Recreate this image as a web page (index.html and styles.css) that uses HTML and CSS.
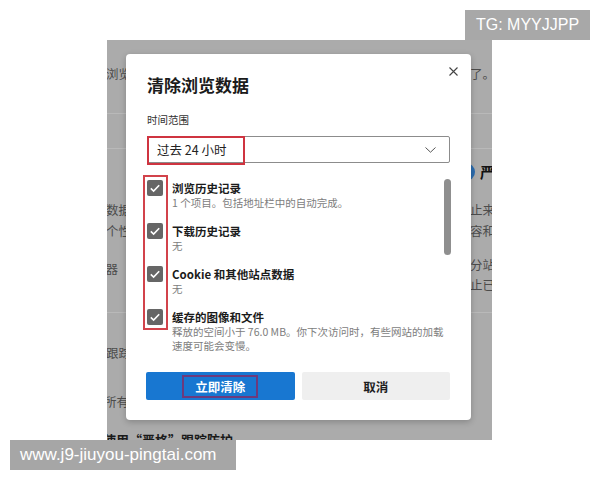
FILE: index.html
```html
<!DOCTYPE html>
<html lang="zh-CN">
<head>
<meta charset="utf-8">
<title>清除浏览数据</title>
<link rel="stylesheet" href="styles.css">
</head>
<body>
<div class="stage">
  <div class="backdrop">
    <div class="bg-page">
      <div class="bg-row row-a"><span class="bl w24"><span>清除你的浏览</span></span><span class="br">了。某些</span></div>
      <div class="bg-divider d1"></div>
      <div class="bg-divider d2"></div>
      <div class="bg-row row-b"><span class="bl"><span></span></span><span class="br strong"><i class="dot"></i>严格</span></div>
      <div class="bg-row row-c"><span class="bl w24"><span>保存数据</span></span><span class="br">止来自</span></div>
      <div class="bg-row row-d"><span class="bl w24"><span>通过个性</span></span><span class="br">容和广</span></div>
      <div class="bg-row row-e"><span class="bl w11 low"><span>浏览器</span></span><span class="br">分站点</span></div>
      <div class="bg-row row-f"><span class="bl"><span></span></span><span class="br">止已知</span></div>
      <div class="bg-divider d3"></div>
      <div class="bg-row row-g"><span class="bl w24"><span>阻止跟踪</span></span><span class="br"></span></div>
      <div class="bg-row row-h"><span class="bl w22"><span>阻止所有</span></span><span class="br"></span></div>
      <div class="bg-row row-i"><span class="bold-line">使用“严格”跟踪防护</span></div>
    </div>

    <div class="dialog">
      <div class="dlg-head">
        <h1 class="dlg-title">清除浏览数据</h1>
        <span class="dlg-close">
          <svg width="9" height="9" viewBox="0 0 9 9"><path d="M0.5 0.5L8.5 8.5M8.5 0.5L0.5 8.5" stroke="#444" stroke-width="1.1" fill="none"/></svg>
        </span>
      </div>
      <div class="dlg-label">时间范围</div>
      <div class="select">
        <span class="select-text">过去 24 小时</span>
        <svg class="chev" width="11" height="6" viewBox="0 0 11 6"><path d="M0.5 0.5L5.5 5.2L10.5 0.5" stroke="#555" stroke-width="1" fill="none"/></svg>
        <span class="mark mark-select"></span>
      </div>
      <div class="list">
        <div class="items">
          <div class="item">
            <span class="cb"><svg width="16" height="16" viewBox="0 0 16 16"><path d="M3.8 8.4L6.6 11.1L12.2 5.2" stroke="#fff" stroke-width="1.6" fill="none"/></svg></span>
            <div class="item-text">
              <div class="item-title">浏览历史记录</div>
              <div class="item-sub">1 个项目。包括地址栏中的自动完成。</div>
            </div>
          </div>
          <div class="item">
            <span class="cb"><svg width="16" height="16" viewBox="0 0 16 16"><path d="M3.8 8.4L6.6 11.1L12.2 5.2" stroke="#fff" stroke-width="1.6" fill="none"/></svg></span>
            <div class="item-text">
              <div class="item-title">下载历史记录</div>
              <div class="item-sub">无</div>
            </div>
          </div>
          <div class="item">
            <span class="cb"><svg width="16" height="16" viewBox="0 0 16 16"><path d="M3.8 8.4L6.6 11.1L12.2 5.2" stroke="#fff" stroke-width="1.6" fill="none"/></svg></span>
            <div class="item-text">
              <div class="item-title">Cookie 和其他站点数据</div>
              <div class="item-sub">无</div>
            </div>
          </div>
          <div class="item">
            <span class="cb"><svg width="16" height="16" viewBox="0 0 16 16"><path d="M3.8 8.4L6.6 11.1L12.2 5.2" stroke="#fff" stroke-width="1.6" fill="none"/></svg></span>
            <div class="item-text">
              <div class="item-title">缓存的图像和文件</div>
              <div class="item-sub">释放的空间小于 76.0 MB。你下次访问时，有些网站的加载<br>速度可能会变慢。</div>
            </div>
          </div>
          <span class="mark mark-checks"></span>
        </div>
        <div class="scroll-track"><div class="scroll-thumb"></div></div>
      </div>
      <div class="buttons">
        <button class="btn btn-primary"><span class="btn-mark">立即清除</span></button>
        <button class="btn btn-secondary">取消</button>
      </div>
    </div>
  </div>

  <div class="tag">TG: MYYJJPP</div>
  <div class="watermark">www.j9-jiuyou-pingtai.com</div>
</div>
</body>
</html>
```

FILE: styles.css
```css
* { box-sizing: border-box; }

html, body {
  margin: 0;
  padding: 0;
  background: #fff;
}

body {
  font-family: "Noto Sans CJK SC", "Noto Sans", sans-serif;
}

.stage {
  position: relative;
  width: 600px;
  height: 480px;
  padding: 40px 0 0 107px;
}

.backdrop {
  position: relative;
  width: 385px;
  height: 400px;
  background: #ababab;
  overflow: hidden;
}

/* dimmed page behind the dialog */
.bg-page {
  display: flex;
  flex-direction: column;
  width: 100%;
  color: #4c4c4c;
  font-size: 12.5px;
}

.bg-row {
  display: flex;
  justify-content: space-between;
  height: 20px;
  line-height: 20px;
  white-space: nowrap;
}

.bl {
  display: flex;
  justify-content: flex-end;
  width: 24px;
  overflow: hidden;
}

.bl.w24 { width: 24px; }
.bl.w22 { width: 22px; }
.bl.w11 { width: 11px; }
.bl.low { padding-top: 4px; }

.br {
  display: flex;
  align-items: center;
  width: 22px;
  overflow: hidden;
}

.br.strong {
  font-weight: 700;
  color: #111;
  font-size: 15px;
}

.dot {
  flex: none;
  width: 18px;
  height: 18px;
  border-radius: 50%;
  background: #2c6cae;
  margin-left: -13px;
  margin-right: 5px;
}

.bg-divider {
  height: 1px;
  background: #b9b9b9;
}

.row-a { margin-top: 24px; }
.d1 { margin-top: 29px; }
.d2 { margin-top: 34px; }
.row-b { margin-top: 13px; }
.row-c { margin-top: 18px; }
.row-d { margin-top: 1px; }
.row-e { margin-top: 14px; }
.row-f { margin-top: 0; }
.d3 { margin-top: 17px; }
.row-g { margin-top: 30px; }
.row-h { margin-top: 29px; }
.row-i { margin-top: 18px; }

.bold-line {
  font-weight: 700;
  color: #1a1a1a;
  font-size: 13px;
  margin-left: -4px;
}

/* dialog */
.dialog {
  position: absolute;
  left: 19px;
  top: 14px;
  width: 345px;
  height: 366px;
  background: #fff;
  border-radius: 4px;
  box-shadow: 0 2px 6px rgba(0, 0, 0, 0.22);
  padding: 19px 21px 19px 21px;
  display: flex;
  flex-direction: column;
}

.dlg-head {
  display: flex;
  justify-content: space-between;
  align-items: flex-start;
}

.dlg-title {
  margin: 0;
  font-size: 17px;
  line-height: 24px;
  font-weight: 700;
  color: #1b1b1b;
}

.dlg-close {
  display: flex;
  margin-top: -6px;
  margin-right: -8px;
}

.dlg-label {
  margin-top: 15px;
  font-size: 10.5px;
  line-height: 16px;
  color: #333;
}

.select {
  position: relative;
  margin-top: 8px;
  height: 27px;
  border: 1px solid #8c8c8c;
  border-radius: 2px;
  display: flex;
  align-items: center;
  justify-content: space-between;
  padding: 0 13px 0 9px;
}

.select-text {
  font-size: 12.5px;
  color: #222;
}

.mark {
  position: absolute;
  border: 2px solid #cf3440;
}

.mark-select {
  left: -1px;
  top: -1px;
  width: 98px;
  height: 29px;
}

.list {
  margin-top: 17px;
  display: flex;
  justify-content: space-between;
}

.items {
  position: relative;
  display: flex;
  flex-direction: column;
  gap: 13px;
}

.item {
  display: flex;
  align-items: flex-start;
  gap: 9px;
}

.cb {
  flex: none;
  width: 16px;
  height: 16px;
  border-radius: 2px;
  background: #666;
  display: flex;
}

.item-title {
  font-size: 11.5px;
  line-height: 16px;
  font-weight: 700;
  color: #1b1b1b;
}

.item-sub {
  font-size: 10.5px;
  line-height: 14px;
  color: #7d7d7d;
}

.mark-checks {
  left: -4px;
  top: -5px;
  width: 25px;
  height: 155px;
  border-color: #d2434b;
}

.scroll-track {
  width: 7px;
  margin-right: -1px;
}

.scroll-thumb {
  margin-top: -1px;
  height: 76px;
  border-radius: 4px;
  background: #8f8f8f;
}

.buttons {
  margin-top: 19px;
  display: grid;
  grid-template-columns: 1fr 1fr;
  gap: 7px;
  margin-left: -1px;
}

.btn {
  height: 28px;
  border: none;
  border-radius: 2px;
  font-family: "Noto Sans CJK SC", "Noto Sans", sans-serif;
  font-size: 12.5px;
  font-weight: 700;
  display: flex;
  align-items: center;
  justify-content: center;
  padding: 0;
}

.btn-primary {
  background: #1877d1;
  color: #fff;
}

.btn-mark {
  display: inline-block;
  height: 23px;
  line-height: 19px;
  padding: 0 11px;
  border: 2px solid #6d3a7c;
}

.btn-secondary {
  background: #efefef;
  color: #1f1f1f;
}

/* overlays */
.tag {
  position: absolute;
  left: 465px;
  top: 10px;
  width: 125px;
  height: 30px;
  background: #a8a8a8;
  color: #fff;
  font-family: "Liberation Sans", Arial, sans-serif;
  font-size: 16px;
  line-height: 30px;
  text-align: center;
}

.watermark {
  position: absolute;
  left: 10px;
  top: 440px;
  width: 226px;
  height: 30px;
  background: #a6a6a6;
  color: #fff;
  font-family: "Liberation Sans", Arial, sans-serif;
  font-size: 17px;
  line-height: 30px;
  padding-left: 10px;
}
```
